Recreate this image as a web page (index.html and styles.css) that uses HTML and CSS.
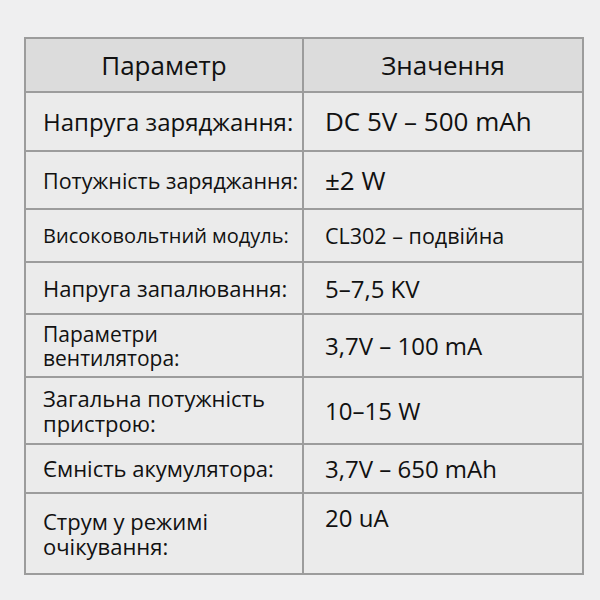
FILE: index.html
```html
<!DOCTYPE html>
<html lang="uk">
<head>
<meta charset="utf-8">
<title>Параметри</title>
<link rel="stylesheet" href="styles.css">
</head>
<body>
<div class="page">
<table class="spec">
  <colgroup><col class="c1"><col class="c2"></colgroup>
  <thead>
    <tr class="h"><th>Параметр</th><th>Значення</th></tr>
  </thead>
  <tbody>
    <tr class="r1"><td>Напруга заряджання:</td><td>DC 5V – 500 mAh</td></tr>
    <tr class="r2"><td>Потужність заряджання:</td><td>±2 W</td></tr>
    <tr class="r3"><td>Високовольтний модуль:</td><td>CL302 – подвійна</td></tr>
    <tr class="r4"><td>Напруга запалювання:</td><td>5–7,5 KV</td></tr>
    <tr class="r5"><td>Параметри<br>вентилятора:</td><td>3,7V – 100 mA</td></tr>
    <tr class="r6"><td>Загальна потужність<br>пристрою:</td><td>10–15 W</td></tr>
    <tr class="r7"><td>Ємність акумулятора:</td><td>3,7V – 650 mAh</td></tr>
    <tr class="r8"><td>Струм у режимі<br>очікування:</td><td class="top">20 uA</td></tr>
  </tbody>
</table>
</div>
</body>
</html>
```
FILE: styles.css
```css
html, body {
  margin: 0;
  padding: 0;
}
body {
  background: #efeff0;
  width: 600px;
  height: 600px;
  overflow: hidden;
}
.page {
  padding: 37px 0 0 24px;
}
.spec {
  border-collapse: collapse;
  table-layout: fixed;
  width: 558px;
  font-family: "Open Sans", "Noto Sans", sans-serif;
  color: #111111;
}
.c1 { width: 278px; }
.c2 { width: 280px; }
.spec th, .spec td {
  border: 2px solid #9c9c9c;
  padding: 0;
  vertical-align: middle;
  text-align: left;
  white-space: nowrap;
}
.spec th {
  background: #dcdcdc;
  font-size: 26px;
  font-weight: 500;
  text-align: center;
  height: 52px;
}
.spec td {
  background: #ebebeb;
  font-size: 22px;
  line-height: 25px;
}
.spec td:first-child { padding-left: 17px; }
.spec td:last-child { padding-left: 21px; font-size: 24px; }
.r1 td:first-child { font-size: 24px; }
.r2 td:first-child { font-size: 21.5px; }
.r3 td:first-child { font-size: 20px; }
.r5 td:first-child { font-size: 21px; line-height: 24px; }
.r1 td:last-child, .r2 td:last-child { font-size: 26px; }
.r3 td:last-child { font-size: 21.5px; }
.r1 td { height: 57px; }
.r2 td { height: 56px; }
.r3 td { height: 51px; }
.r4 td { height: 50px; }
.r5 td { height: 61px; }
.r6 td { height: 65px; }
.r7 td { height: 47px; }
.r8 td { height: 68px; }
.spec td.top {
  vertical-align: top;
  padding-top: 11px;
}
```
